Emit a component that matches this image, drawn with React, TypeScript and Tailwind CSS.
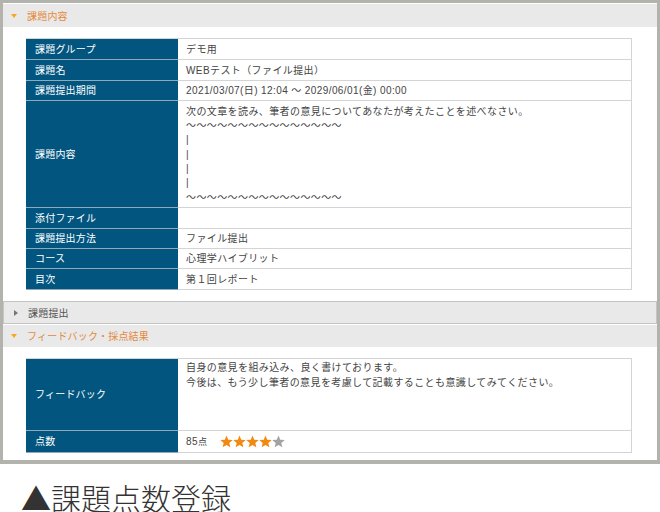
const FONT = "font-['Liberation_Sans','Noto_Sans_CJK_JP','Noto_Sans_CJK_SC',sans-serif]";

function Row({ label, h, children }: { label: string; h: string; children?: React.ReactNode }) {
  return (
    <div className={`flex ${h}`}>
      <div className="flex w-[152px] shrink-0 items-center border-b border-[#8fa9bb] bg-[#01557f] pl-[9px] text-[10px] tracking-[0.2px] text-white">
        {label}
      </div>
      <div className="flex-1 border-b border-r border-[#d4d4d4] pl-[8px] text-[10px] tracking-[0.4px] text-[#444]">
        {children}
      </div>
    </div>
  );
}

function One({ children }: { children?: React.ReactNode }) {
  return <div className="flex h-full items-center">{children}</div>;
}

function Header({ text, open, boxed, h }: { text: string; open: boolean; boxed?: boolean; h: string }) {
  return (
    <div className={`flex items-center bg-[#e9e9e9] ${h} ${boxed ? "border border-[#c4c4c4]" : ""}`}>
      {open ? (
        <span className="ml-[8px] h-0 w-0 border-x-[3px] border-t-[4px] border-x-transparent border-t-[#f5a623]" />
      ) : (
        <span className="ml-[10px] h-0 w-0 border-y-[3px] border-l-[4px] border-y-transparent border-l-[#777]" />
      )}
      <span className={`ml-[10px] pt-px text-[10px] tracking-[0.2px] ${open ? "text-[#e58a3c]" : "text-[#555]"}`}>
        {text}
      </span>
    </div>
  );
}

function Star({ on }: { on: boolean }) {
  return (
    <svg width="13" height="13" viewBox="0 0 24 24" className={on ? "fill-[#f08a12]" : "fill-[#a3a3a3]"}>
      <path d="M12 1l3.2 7.6 8.3.7-6.3 5.4 1.9 8.1L12 18.5 4.9 22.8l1.9-8.1L.5 9.3l8.3-.7z" />
    </svg>
  );
}

export default function App() {
  return (
    <div className={`w-[660px] bg-white ${FONT}`}>
      <div className="h-[464px] border-[3px] border-b-[4px] border-[#b3b3ad] bg-white">
        <div className="pt-px">
          <Header text="課題内容" open h="h-[23px]" />
        </div>
        <div className="ml-[23px] mt-[11px] w-[606px] border-t border-[#d4d4d4]">
          <Row label="課題グループ" h="h-[21px]"><One>デモ用</One></Row>
          <Row label="課題名" h="h-[21px]"><One>WEBテスト（ファイル提出）</One></Row>
          <Row label="課題提出期間" h="h-[20px]"><One>2021/03/07(日) 12:04 ～ 2029/06/01(金) 00:00</One></Row>
          <Row label="課題内容" h="h-[107px]">
            <div className="pt-[4px] leading-[14.2px]">
              <div>次の文章を読み、筆者の意見についてあなたが考えたことを述べなさい。</div>
              <div>～～～～～～～～～～～～～～～</div>
              <div>|</div>
              <div>|</div>
              <div>|</div>
              <div>|</div>
              <div className="pt-px">～～～～～～～～～～～～～～～</div>
            </div>
          </Row>
          <Row label="添付ファイル" h="h-[21px]" />
          <Row label="課題提出方法" h="h-[20px]"><One>ファイル提出</One></Row>
          <Row label="コース" h="h-[20px]"><One>心理学ハイブリット</One></Row>
          <Row label="目次" h="h-[21px]"><One>第１回レポート</One></Row>
        </div>
        <div className="mt-[11px]">
          <Header text="課題提出" open={false} boxed h="h-[23px]" />
        </div>
        <div className="mt-[1px]">
          <Header text="フィードバック・採点結果" open h="h-[22px]" />
        </div>
        <div className="ml-[23px] mt-[11px] w-[606px] border-t border-[#d4d4d4]">
          <Row label="フィードバック" h="h-[72px]">
            <div className="pt-[1px] leading-[15px]">
              <div>自身の意見を組み込み、良く書けております。</div>
              <div>今後は、もう少し筆者の意見を考慮して記載することも意識してみてください。</div>
            </div>
          </Row>
          <Row label="点数" h="h-[22px]">
            <div className="flex h-full items-center">
              <span>85<span className="text-[9px]">点</span></span>
              <span className="ml-[13px] flex">
                <Star on /><Star on /><Star on /><Star on /><Star on={false} />
              </span>
            </div>
          </Row>
        </div>
      </div>
      <div className="ml-[21px] mt-[18px] font-['Noto_Sans_CJK_JP',sans-serif] text-[30px] font-light leading-[30px] text-[#333]">
        ▲課題点数登録
      </div>
    </div>
  );
}
